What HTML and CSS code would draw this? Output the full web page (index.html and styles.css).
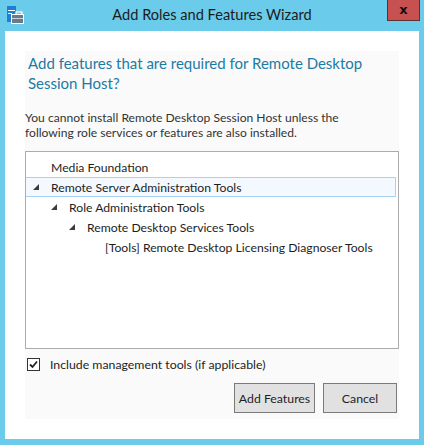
FILE: index.html
```html
<!DOCTYPE html>
<html lang="en">

<head>
    <meta charset="UTF-8" />
    <meta name="viewport" content="width=device-width, initial-scale=1.0" />
    <title>Add Roles and Features Wizard</title>
    <link rel="stylesheet" href="styles.css">
</head>

<body>
    <div class="window">
        <div class="titlebar">
            <svg class="app-icon" width="17" height="18" viewBox="0 0 17 18">
                <!-- server tower -->
                <rect x="0" y="0" width="9" height="16" fill="#1d7fd6" />
                <rect x="1" y="4" width="7" height="1" fill="#ffffff" />
                <rect x="1" y="7" width="4" height="1" fill="#ffffff" />
                <!-- briefcase -->
                <rect x="9" y="6" width="6" height="3" fill="none" stroke="#ffffff" stroke-width="1.2" />
                <rect x="4" y="8" width="13" height="10" fill="#ffffff" />
                <rect x="5" y="9" width="11" height="8" fill="#6b7a89" />
                <rect x="5" y="12" width="11" height="1" fill="#c9d1d8" />
            </svg>
            <div class="title">Add Roles and Features Wizard</div>
            <button class="close-button" type="button">x</button>
        </div>

        <div class="client">
            <div class="panel">
                <h1>Add features that are required for Remote Desktop Session Host?</h1>
                <p class="note">You cannot install Remote Desktop Session Host unless the following role services or features are also installed.</p>

                <div class="tree">
                    <div class="row lvl0"><span class="arrow"></span>Media Foundation</div>
                    <div class="row lvl0 selected">
                        <span class="arrow"><svg width="6" height="6" viewBox="0 0 6 6"><polygon points="6,0 6,6 0,6" /></svg></span>Remote Server Administration Tools
                    </div>
                    <div class="row lvl1">
                        <span class="arrow"><svg width="6" height="6" viewBox="0 0 6 6"><polygon points="6,0 6,6 0,6" /></svg></span>Role Administration Tools
                    </div>
                    <div class="row lvl2">
                        <span class="arrow"><svg width="6" height="6" viewBox="0 0 6 6"><polygon points="6,0 6,6 0,6" /></svg></span>Remote Desktop Services Tools
                    </div>
                    <div class="row lvl3"><span class="arrow"></span>[Tools] Remote Desktop Licensing Diagnoser Tools</div>
                </div>

                <label class="check">
                    <span class="box">
                        <svg width="11" height="11" viewBox="0 0 11 11">
                            <polyline points="2,5.5 4.5,8 9,2.5" fill="none" stroke="#222" stroke-width="1.8" />
                        </svg>
                    </span>
                    Include management tools (if applicable)
                </label>

                <div class="buttons">
                    <button type="button" class="btn btn-add">Add Features</button>
                    <button type="button" class="btn btn-cancel">Cancel</button>
                </div>
            </div>
        </div>
    </div>
</body>

</html>
```

FILE: styles.css
```css
body {
    margin: 0;
    font-family: 'Lato', 'Open Sans', sans-serif;
    background-color: #6bcbea;
}

.window {
    width: 424px;
    height: 445px;
    background-color: #6bcbea;
}

/* title bar: icon | centered title | close */
.titlebar {
    display: grid;
    grid-template-columns: 1fr auto 1fr;
    height: 31px;
}

.app-icon {
    margin: 6px 0 0 7px;
}

.title {
    font-size: 14.6px;
    line-height: 30px;
    color: #1b1b1b;
}

.close-button {
    justify-self: end;
    width: 33px;
    height: 21px;
    margin-right: 4px;
    padding: 0;
    background-color: #c75050;
    border: 1px solid #5e3030;
    border-top: none;
    font-family: 'DejaVu Sans', sans-serif;
    font-size: 13px;
    font-weight: bold;
    line-height: 18px;
    color: #111;
}

.client {
    height: 408px;
    margin: 0 5px;
    padding: 20px;
    box-sizing: border-box;
    background-color: #ffffff;
}

.panel {
    height: 100%;
    background-color: #fafafa;
}

.panel h1 {
    margin: 0;
    padding: 2px 0 0 3px;
    font-size: 15px;
    font-weight: normal;
    line-height: 20px;
    color: #1a7ba4;
}

.note {
    max-width: 330px;
    margin: 17px 0 0 0;
    font-size: 12.1px;
    line-height: 15px;
    color: #333;
}

.tree {
    height: 198px;
    margin-top: 11px;
    padding-top: 5px;
    box-sizing: border-box;
    background-color: #ffffff;
    border: 1px solid #acacac;
}

.row {
    display: flex;
    align-items: center;
    height: 20px;
    margin-right: 2px;
    font-size: 12.2px;
    color: #1e1e1e;
    box-sizing: border-box;
    border: 1px solid transparent;
    border-left: none;
}

.row.selected {
    background-color: #f3f9fe;
    border-color: #a9d1f2;
}

.arrow {
    display: flex;
    align-items: center;
    width: 18px;
    height: 100%;
}

.arrow polygon {
    fill: #3c3c3c;
}

.lvl0 { padding-left: 7px; }
.lvl1 { padding-left: 25px; }
.lvl2 { padding-left: 43px; }
.lvl3 { padding-left: 61px; }

.check {
    display: flex;
    align-items: center;
    gap: 10px;
    height: 16px;
    margin: 7px 0 0 2px;
    font-size: 12.3px;
    color: #1e1e1e;
}

.check .box {
    display: flex;
    align-items: center;
    justify-content: center;
    width: 13px;
    height: 13px;
    box-sizing: border-box;
    border: 1px solid #333;
    background-color: #ffffff;
}

.buttons {
    display: flex;
    justify-content: flex-end;
    gap: 8px;
    margin: 11px 2px 0 0;
}

.btn {
    height: 30px;
    padding: 0;
    background-color: #e1e1e1;
    border: 1px solid #7a7a7a;
    font-family: inherit;
    font-size: 12.3px;
    color: #1e1e1e;
}

.btn-add { width: 81px; }
.btn-cancel { width: 74px; }
```
